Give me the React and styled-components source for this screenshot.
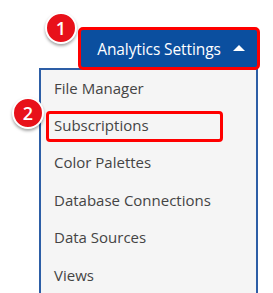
import React from "react";
import styled, { createGlobalStyle } from "styled-components";

const Global = createGlobalStyle`
  html, body { margin: 0; padding: 0; background: #ffffff; }
  body { font-family: "Open Sans", "Noto Sans", sans-serif; overflow: hidden; }
`;

const Stage = styled.div`
  position: relative;
  width: 273px;
  height: 293px;
  overflow: hidden;
  padding-top: 27px;
  box-sizing: border-box;
`;

const ButtonFrame = styled.div`
  position: relative;
  z-index: 2;
  margin-left: 78px;
  width: 182px;
  height: 43px;
  box-sizing: border-box;
  border: 3px solid #ff0000;
  border-radius: 5px;
  background: #0b4f9f;
  display: flex;
  align-items: center;
  justify-content: center;
  gap: 12px;
  padding-left: 4px;
`;

const ButtonLabel = styled.span`
  color: #ffffff;
  font-size: 15.5px;
  letter-spacing: -0.1px;
`;

const Caret = styled.span`
  width: 0;
  height: 0;
  border-left: 6px solid transparent;
  border-right: 6px solid transparent;
  border-bottom: 6px solid #ffffff;
  margin-top: -1px;
`;

const Panel = styled.div`
  position: relative;
  z-index: 1;
  margin-top: -2px;
  margin-left: 39px;
  width: 219px;
  height: 240px;
  box-sizing: border-box;
  background: #f5f5f5;
  border: 2px solid #2d5ea6;
  border-bottom: none;
  display: flex;
  flex-direction: column;
`;

const Item = styled.div`
  position: relative;
  height: 37.4px;
  box-sizing: border-box;
  display: flex;
  align-items: center;
  padding: 0 0 2px 13px;
  font-size: 15px;
  color: #444444;
  white-space: nowrap;
`;

const Highlight = styled.span`
  position: absolute;
  left: 5px;
  top: 4px;
  width: 177px;
  height: 31px;
  box-sizing: border-box;
  border: 3px solid #ff0000;
  border-radius: 4px;
`;

const Badge = styled.div`
  position: absolute;
  z-index: 3;
  left: ${(p) => p.$x - 16}px;
  top: ${(p) => p.$y - 16}px;
  width: 32px;
  height: 32px;
  box-sizing: border-box;
  border-radius: 50%;
  background: #e8111a;
  border: 2px solid #ffffff;
  box-shadow: 0 2px 3px rgba(0, 0, 0, 0.35);
  color: #ffffff;
  font-size: 18px;
  font-weight: 600;
  display: flex;
  align-items: center;
  justify-content: center;
  line-height: 1;
`;

const items = [
  "File Manager",
  "Subscriptions",
  "Color Palettes",
  "Database Connections",
  "Data Sources",
  "Views",
];

export default function App() {
  return (
    <>
      <Global />
      <Stage>
        <ButtonFrame>
          <ButtonLabel>Analytics Settings</ButtonLabel>
          <Caret />
        </ButtonFrame>
        <Panel>
          {items.map((t) => (
            <Item key={t}>
              {t}
              {t === "Subscriptions" && <Highlight />}
            </Item>
          ))}
        </Panel>
        <Badge $x={61} $y={28}>1</Badge>
        <Badge $x={28} $y={113}>2</Badge>
      </Stage>
    </>
  );
}
